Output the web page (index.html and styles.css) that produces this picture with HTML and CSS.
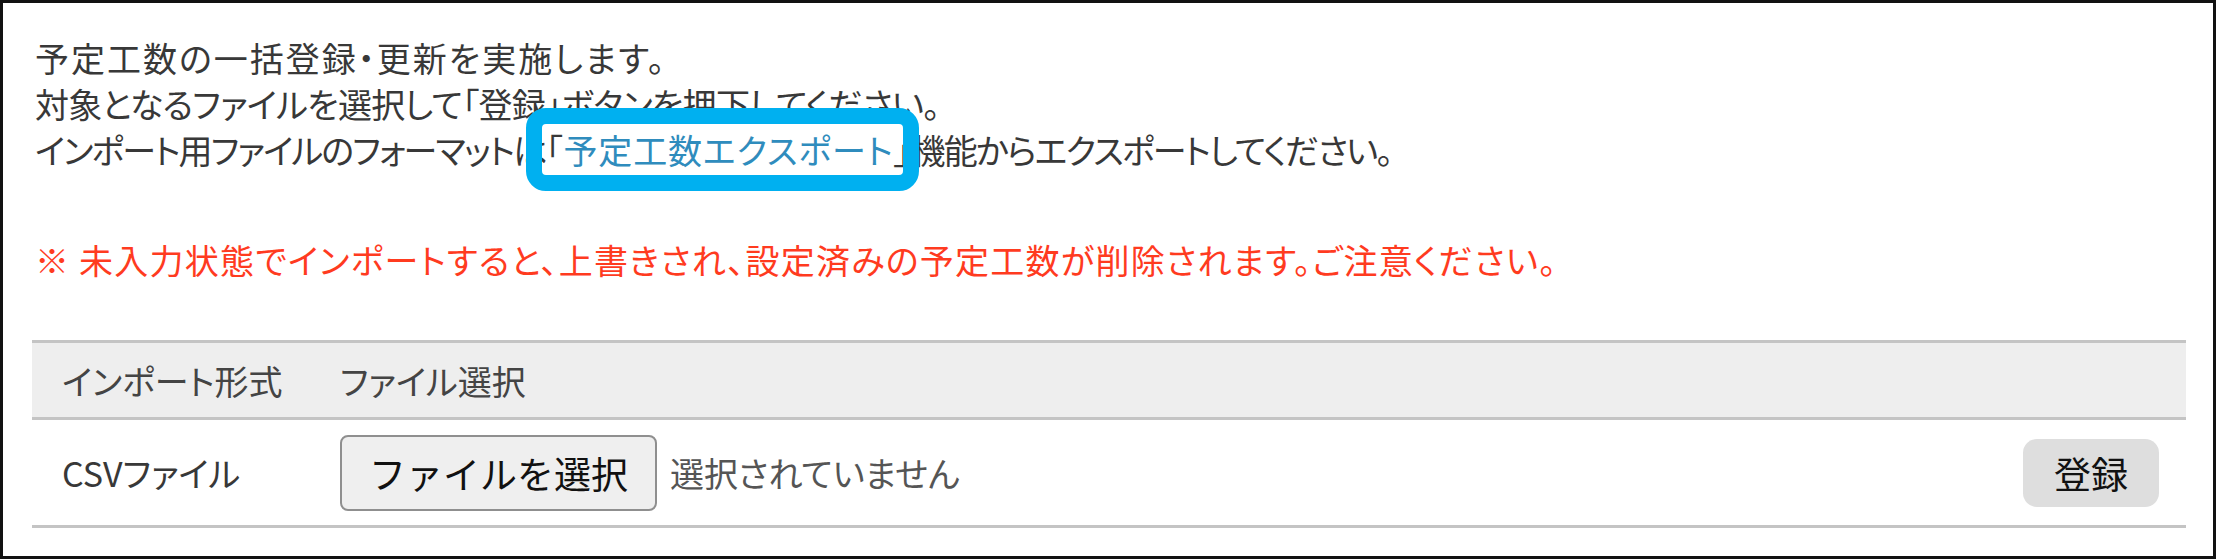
FILE: index.html
```html
<!DOCTYPE html>
<html lang="ja">
<head>
    <meta charset="UTF-8">
    <title>予定工数インポート</title>
    <link rel="stylesheet" href="styles.css">
</head>
<body>
    <div class="panel">
        <div class="lead">
            <p class="line line-1">予定工数の一括登録・更新を実施します。</p>
            <p class="line line-2">対象となるファイルを選択して「登録」ボタンを押下してください。</p>
            <p class="line line-3">インポート用ファイルのフォーマットは<span class="mark">「<a href="#" class="link">予定工数エクスポート</a>」</span>機能からエクスポートしてください。</p>
        </div>
        <p class="line warn">※ 未入力状態でインポートすると、上書きされ、設定済みの予定工数が削除されます。ご注意ください。</p>

        <div class="import-table">
            <div class="row head">
                <div class="cell type">インポート形式</div>
                <div class="cell file">ファイル選択</div>
                <div class="cell action"></div>
            </div>
            <div class="row body-row">
                <div class="cell type">CSVファイル</div>
                <div class="cell file">
                    <button class="file-btn">ファイルを選択</button>
                    <span class="file-name">選択されていません</span>
                </div>
                <div class="cell action">
                    <button class="submit">登録</button>
                </div>
            </div>
        </div>
    </div>
</body>
</html>
```

FILE: styles.css
```css
*,
*::before,
*::after {
    margin: 0;
    padding: 0;
    box-sizing: border-box;
}

body {
    font-family: "Noto Sans CJK JP", sans-serif;
    font-feature-settings: "palt";
    color: #383838;
    background: #fff;
}

.panel {
    width: 2216px;
    height: 559px;
    border: 3px solid #111;
    padding: 32px 27px 0 29px;
}

.line {
    font-size: 34px;
    line-height: 46px;
    padding-left: 3px;
    white-space: nowrap;
}

.line-1 {
    letter-spacing: 2px;
}

.line-2 {
    letter-spacing: -0.7px;
}

.line-3 {
    letter-spacing: -1.8px;
}

.warn {
    color: #ff3b1f;
    margin-top: 64px;
    letter-spacing: 1.25px;
}

.mark {
    position: relative;
    letter-spacing: 0.9px;
}

/* annotation frame drawn over the link */
.mark::after {
    content: "";
    position: absolute;
    left: -20px;
    width: 393px;
    top: -17px;
    bottom: -17px;
    border: 16px solid #00b0f0;
    border-radius: 20px;
}

.link {
    color: #2f8cbd;
    text-decoration: none;
}

.import-table {
    margin-top: 57px;
    border-top: 3px solid #c4c4c4;
}

.row {
    display: grid;
    grid-template-columns: 308px 1fr auto;
    align-items: center;
    border-bottom: 3px solid #c4c4c4;
}

.head {
    height: 77px;
    background: #eeeeee;
    color: #444;
}

.body-row {
    height: 108px;
}

.cell {
    font-size: 34px;
}

.type {
    padding-left: 30px;
}

.file {
    display: flex;
    align-items: center;
}

.action {
    padding-right: 27px;
}

.file-btn {
    width: 317px;
    height: 76px;
    border: 2px solid #8f8f8f;
    border-radius: 8px;
    background: #efefef;
    color: #111;
    font-family: inherit;
    font-size: 37px;
}

.file-name {
    margin-left: 13px;
    color: #555;
}

.submit {
    width: 136px;
    height: 68px;
    border: none;
    border-radius: 14px;
    background: #dedede;
    color: #111;
    font-family: inherit;
    font-size: 37px;
}
```
